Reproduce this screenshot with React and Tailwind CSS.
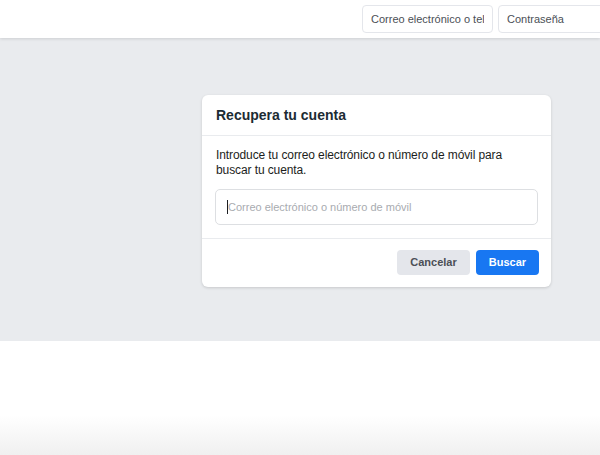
import React from 'react';

const App = () => {
  return (
    <div className="w-[600px] h-[455px] overflow-hidden bg-white font-['Liberation_Sans',Arial,sans-serif]">
      {/* barra superior */}
      <header className="relative z-10 h-[38px] bg-white shadow-[0_1px_3px_rgba(0,0,0,0.12)] flex items-center pl-[362px] gap-[5px]">
        <input
          className="w-[131px] h-[28px] shrink-0 rounded-[4px] border border-[#e4e6eb] bg-white px-[8px] text-[11px] text-[#4b4f56] outline-none"
          defaultValue="Correo electrónico o teléfono"
        />
        <input
          className="w-[140px] h-[28px] shrink-0 rounded-[4px] border border-[#e4e6eb] bg-white px-[8px] text-[11px] text-[#4b4f56] outline-none"
          defaultValue="Contraseña"
        />
      </header>

      <main className="h-[303px] bg-[#e9ebee] pt-[57px] pl-[202px]">
        <div className="w-[349px] rounded-[6px] bg-white shadow-[0_1px_3px_rgba(0,0,0,0.15)]">
          <div className="h-[41px] flex items-center px-[14px] border-b border-[#e9ebee]">
            <h2 className="text-[14px] font-bold text-[#1c2b33]">Recupera tu cuenta</h2>
          </div>
          <div className="px-[13px] pt-[12px] pb-[13px] border-b border-[#e9ebee]">
            <p className="text-[12px] leading-[15px] tracking-[-0.1px] text-[#1c1e21] pl-[1px]">
              Introduce tu correo electrónico o número de móvil para buscar tu cuenta.
            </p>
            <div className="mt-[11px] w-full h-[36px] rounded-[5px] border border-[#dddfe2] px-[11px] flex items-center">
              <span className="w-px h-[14px] bg-[#1c1e21]" />
              <input
                className="flex-1 min-w-0 bg-transparent text-[11px] text-[#1c1e21] placeholder:text-[#a8abb0] outline-none"
                placeholder="Correo electrónico o número de móvil"
              />
            </div>
          </div>
          <div className="flex justify-end gap-[6px] px-[12px] pt-[11px] pb-[12px]">
            <button className="h-[25px] w-[73px] rounded-[4px] bg-[#e4e6eb] text-[11px] font-bold text-[#4b4f56]">
              Cancelar
            </button>
            <button className="h-[25px] w-[63px] rounded-[4px] bg-[#1877f2] text-[11px] font-bold text-white">
              Buscar
            </button>
          </div>
        </div>
      </main>

      <footer className="h-[114px] bg-gradient-to-b from-white from-[65%] to-[#f0f0f0]" />
    </div>
  );
};

export default App;
